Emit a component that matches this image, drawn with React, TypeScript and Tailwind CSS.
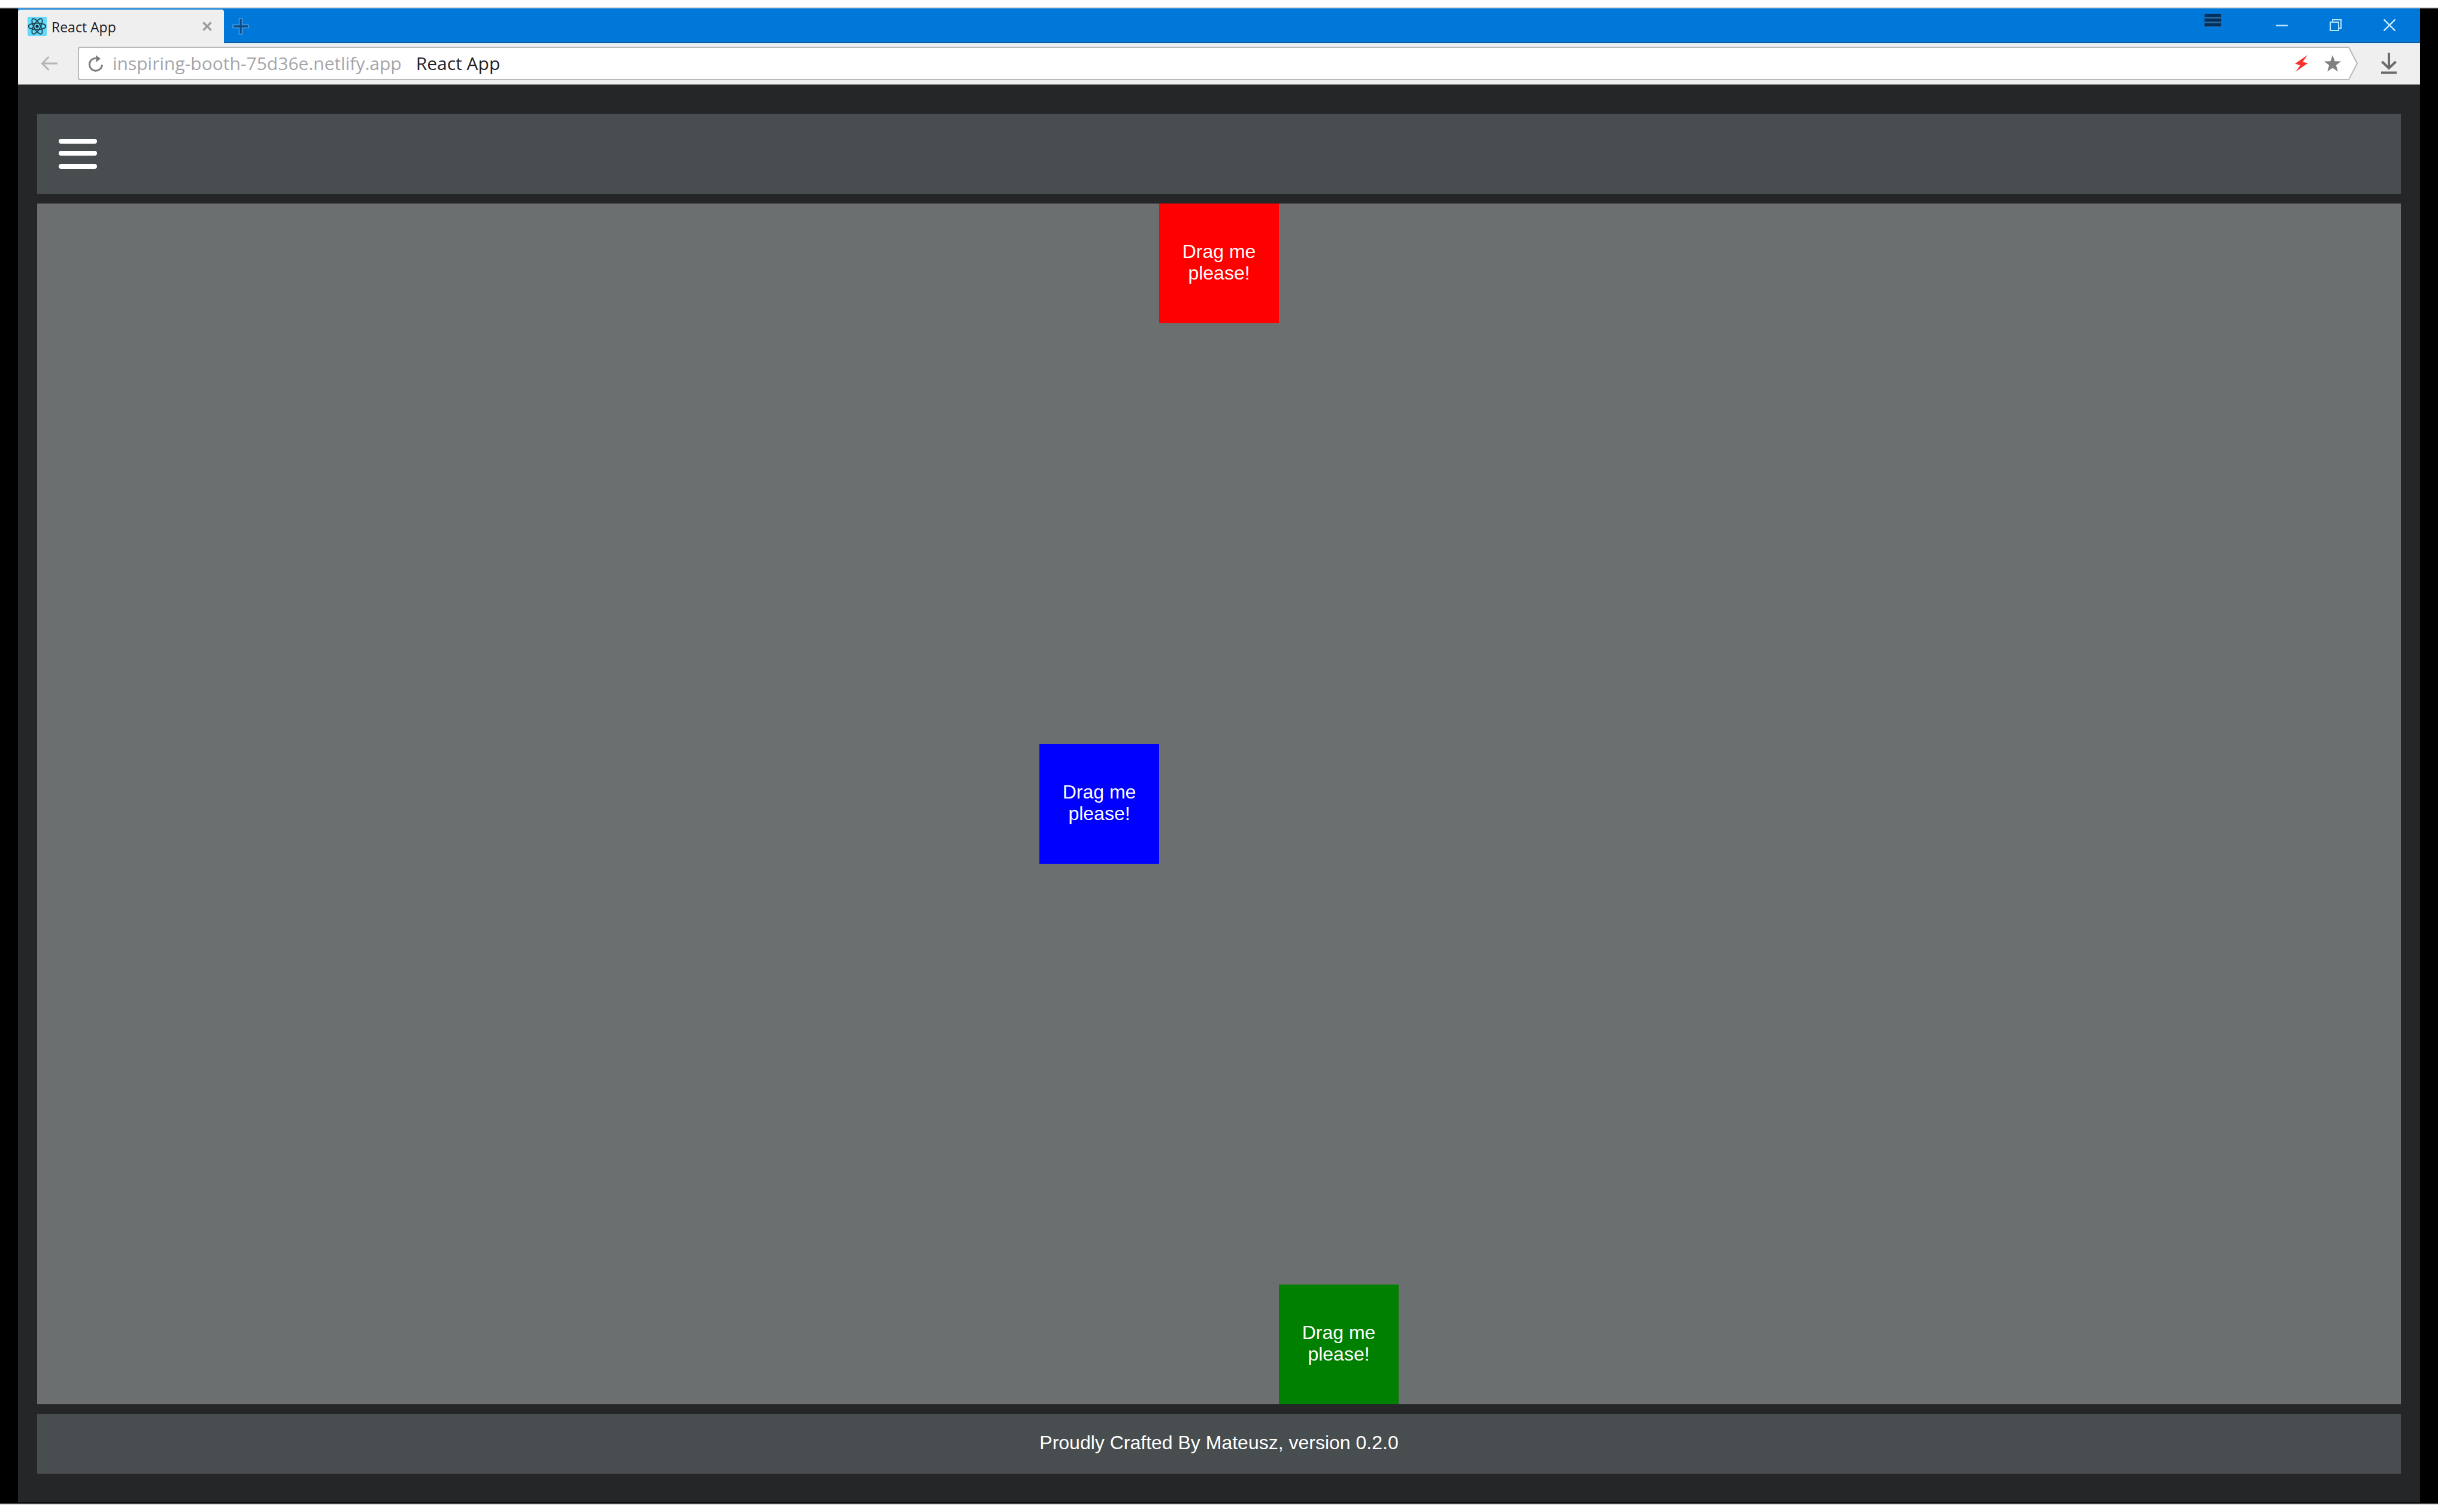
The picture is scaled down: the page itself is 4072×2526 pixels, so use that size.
import React from "react";

function ReactLogo() {
  return (
    <svg className="size-8 shrink-0" viewBox="0 0 32 32" aria-hidden="true">
      <rect width="32" height="32" rx="2" fill="#61dafb" />
      <g fill="none" stroke="#1f4550" strokeWidth="1.8">
        <ellipse cx="16" cy="16" rx="14.500" ry="5.4" />
        <ellipse cx="16" cy="16" rx="14.500" ry="5.4" transform="rotate(60 16 16)" />
        <ellipse cx="16" cy="16" rx="14.500" ry="5.4" transform="rotate(120 16 16)" />
      </g>
      <circle cx="16" cy="16" r="2.6" fill="#12303a" />
    </svg>
  );
}

function TitleBar() {
  return (
    <div className="flex h-[60px] items-stretch bg-[#efefef]">
      <div className="flex bg-[#0078d9]">
        <div className="mt-0.5 flex w-[344px] items-center gap-2 rounded-t-sm bg-[#efefef] pr-4 pb-0.5 pl-4">
          <ReactLogo />
          <span className="flex-1 pt-0.5 text-[23px] leading-8 whitespace-nowrap text-[#1c1c24]">React App</span>
          <button type="button" aria-label="Close tab" className="flex size-6 items-center justify-center">
            <svg className="size-4" viewBox="0 0 16 16" stroke="#9a9a9a" strokeWidth="3.2" aria-hidden="true">
              <path d="M1.5 1.5 14.5 14.5M14.5 1.5 1.5 14.5" />
            </svg>
          </button>
        </div>
      </div>
      <div className="flex flex-1 flex-col">
        <div className="flex h-[58px] items-center justify-between border-b-2 border-[#17599a] bg-[#0078d9] pr-1.5 pl-3">
          <button type="button" aria-label="New tab" className="mt-1 flex size-8 items-center justify-center">
            <svg className="size-7" viewBox="0 0 28 28" aria-hidden="true">
              <path
                d="M11.5 1h5v10.500h10.500v5H16.500v10.500h-5V16.500H1v-5h10.500z"
                fill="#0b4a84"
                stroke="#4ba0e6"
                strokeWidth="1.6"
              />
            </svg>
          </button>
          <div className="flex h-full items-center">
            <button type="button" aria-label="Menu" className="mr-10 flex w-[60px] justify-center self-start pt-[9px]">
              <svg className="h-[22px] w-7" viewBox="0 0 28 22" aria-hidden="true">
                <rect width="28" height="22" fill="#286a9f" />
                <path d="M0 0h28v5H0zM0 8h28v5H0zM0 16h28v5H0z" fill="#022f5c" />
              </svg>
            </button>
            <button type="button" aria-label="Minimize" className="flex h-full w-[90px] items-center justify-center">
              <svg className="size-5" viewBox="0 0 20 20" aria-hidden="true">
                <path d="M0 9.500h20v2.500H0z" fill="#b4e6ff" />
              </svg>
            </button>
            <button type="button" aria-label="Restore" className="flex h-full w-[90px] items-center justify-center">
              <svg className="size-5" viewBox="0 0 20 20" fill="none" stroke="#b4e6ff" strokeWidth="2" aria-hidden="true">
                <path d="M1 5h14v14H1zM5 5V1h14v14h-4" />
              </svg>
            </button>
            <button type="button" aria-label="Close" className="flex h-full w-[90px] items-center justify-center">
              <svg className="size-5" viewBox="0 0 20 20" stroke="#c4ebff" strokeWidth="2.4" aria-hidden="true">
                <path d="M.5 .5 19.500 19.500M19.500 .5 .5 19.500" />
              </svg>
            </button>
          </div>
        </div>
        <div className="h-0.5 bg-[#dceefa]" />
      </div>
    </div>
  );
}

function Toolbar() {
  return (
    <div className="flex h-[68px] items-center border-b-2 border-[#8b8d8c] bg-[#efefef] pt-1 pr-9 pb-1.5 pl-9">
      <button type="button" aria-label="Back" className="mr-8 flex h-14 w-8 items-center justify-center">
        <svg className="size-7" viewBox="0 0 28 28" fill="none" stroke="#b4b4b4" strokeWidth="3" aria-hidden="true">
          <path d="M13.500 3 2.500 14 13.500 25M2.500 14H28" />
        </svg>
      </button>
      <div className="flex h-14 flex-1 items-center rounded-l-sm border-2 border-r-0 border-[#b9b9b9] bg-white pr-2.5 pl-4">
        <button type="button" aria-label="Reload" className="mr-4 flex h-8 w-6 items-center justify-center">
          <svg className="h-7 w-6 shrink-0" viewBox="0 0 24 28" aria-hidden="true">
            <path d="M13.500 5.300A10.500 10.500 0 1 0 22.500 16" fill="none" stroke="#7d7d7d" strokeWidth="3" />
            <path d="M12 0 20 6 12.500 12z" fill="#7d7d7d" />
          </svg>
        </button>
        <input
          type="text"
          aria-label="Address"
          defaultValue="inspiring-booth-75d36e.netlify.app"
          className="field-sizing-content bg-transparent text-[30px] leading-10 text-[#a5a5a9] outline-none"
        />
        <span className="ml-6 flex-1 text-[30px] leading-10 whitespace-nowrap text-[#22222a]">React App</span>
        <button type="button" aria-label="Turbo mode" className="mr-6 flex size-7 items-center justify-center">
          <svg className="h-7 w-[22px] shrink-0" viewBox="0 0 22 28" fill="#f5322b" aria-hidden="true">
            <path d="M21 0 0 14.500 9 17 1 28 21.500 13.500 13 11.500z" />
          </svg>
        </button>
        <button type="button" aria-label="Bookmark" className="flex size-7 items-center justify-center">
          <svg className="size-7" viewBox="0 0 28 28" fill="#808080" aria-hidden="true">
            <path d="M14 0 17.600 10.200 28 10.600 19.800 17.100 22.800 27.500 14 21.400 5.200 27.500 8.200 17.100 0 10.600 10.400 10.200z" />
          </svg>
        </button>
      </div>
      <svg className="mr-9 h-14 w-[18px] shrink-0" viewBox="0 0 18 56" aria-hidden="true">
        <path d="M0 1h3L17 28 3 55H0" fill="#fff" stroke="#b9b9b9" strokeWidth="2" />
      </svg>
      <button type="button" aria-label="Downloads" className="flex w-8 items-center justify-center">
        <svg className="h-9 w-7 shrink-0" viewBox="0 0 28 36" fill="none" stroke="#6b6b6b" strokeWidth="4" aria-hidden="true">
          <path d="M14 0V26M2.500 15 14 26 25.500 15M1 33.500H27" />
        </svg>
      </button>
    </div>
  );
}

const boxes = [
  { id: "blue", look: "self-center bg-[#0000ff]" },
  { id: "red", look: "self-start bg-[#ff0000]" },
  { id: "green", look: "self-end bg-[#008000]" },
];

function Page() {
  return (
    <div className="flex flex-1 flex-col gap-4 bg-[#242628] px-8 py-12 font-['Liberation_Sans',Arial,sans-serif] text-[32px] leading-9 text-white">
      <header className="flex h-[134px] items-center bg-[#484d50] px-9">
        <button type="button" aria-label="Open menu">
          <svg className="h-[50px] w-16" viewBox="0 0 64 50" fill="#fff" aria-hidden="true">
            <rect width="64" height="8" rx="4" />
            <rect y="20" width="64" height="8" rx="4" />
            <rect y="42" width="64" height="8" rx="4" />
          </svg>
        </button>
      </header>
      <main className="flex flex-1 justify-center bg-[#6c6f70]">
        {boxes.map((box) => (
          <div
            key={box.id}
            draggable
            className={`flex size-[200px] cursor-move items-center justify-center px-8 pb-1 text-center ${box.look}`}
          >
            Drag me please!
          </div>
        ))}
      </main>
      <footer className="flex h-[100px] items-center justify-center bg-[#484d50] pb-1">
        Proudly Crafted By Mateusz, version 0.2.0
      </footer>
    </div>
  );
}

export default function App() {
  return (
    <div className="flex min-h-screen flex-col bg-white py-3 font-['Open_Sans','Noto_Sans',sans-serif]">
      <div className="flex flex-1 flex-col border-y-2 border-[#dadadf] bg-black px-[30px] pb-0.5">
        <TitleBar />
        <Toolbar />
        <Page />
      </div>
    </div>
  );
}
